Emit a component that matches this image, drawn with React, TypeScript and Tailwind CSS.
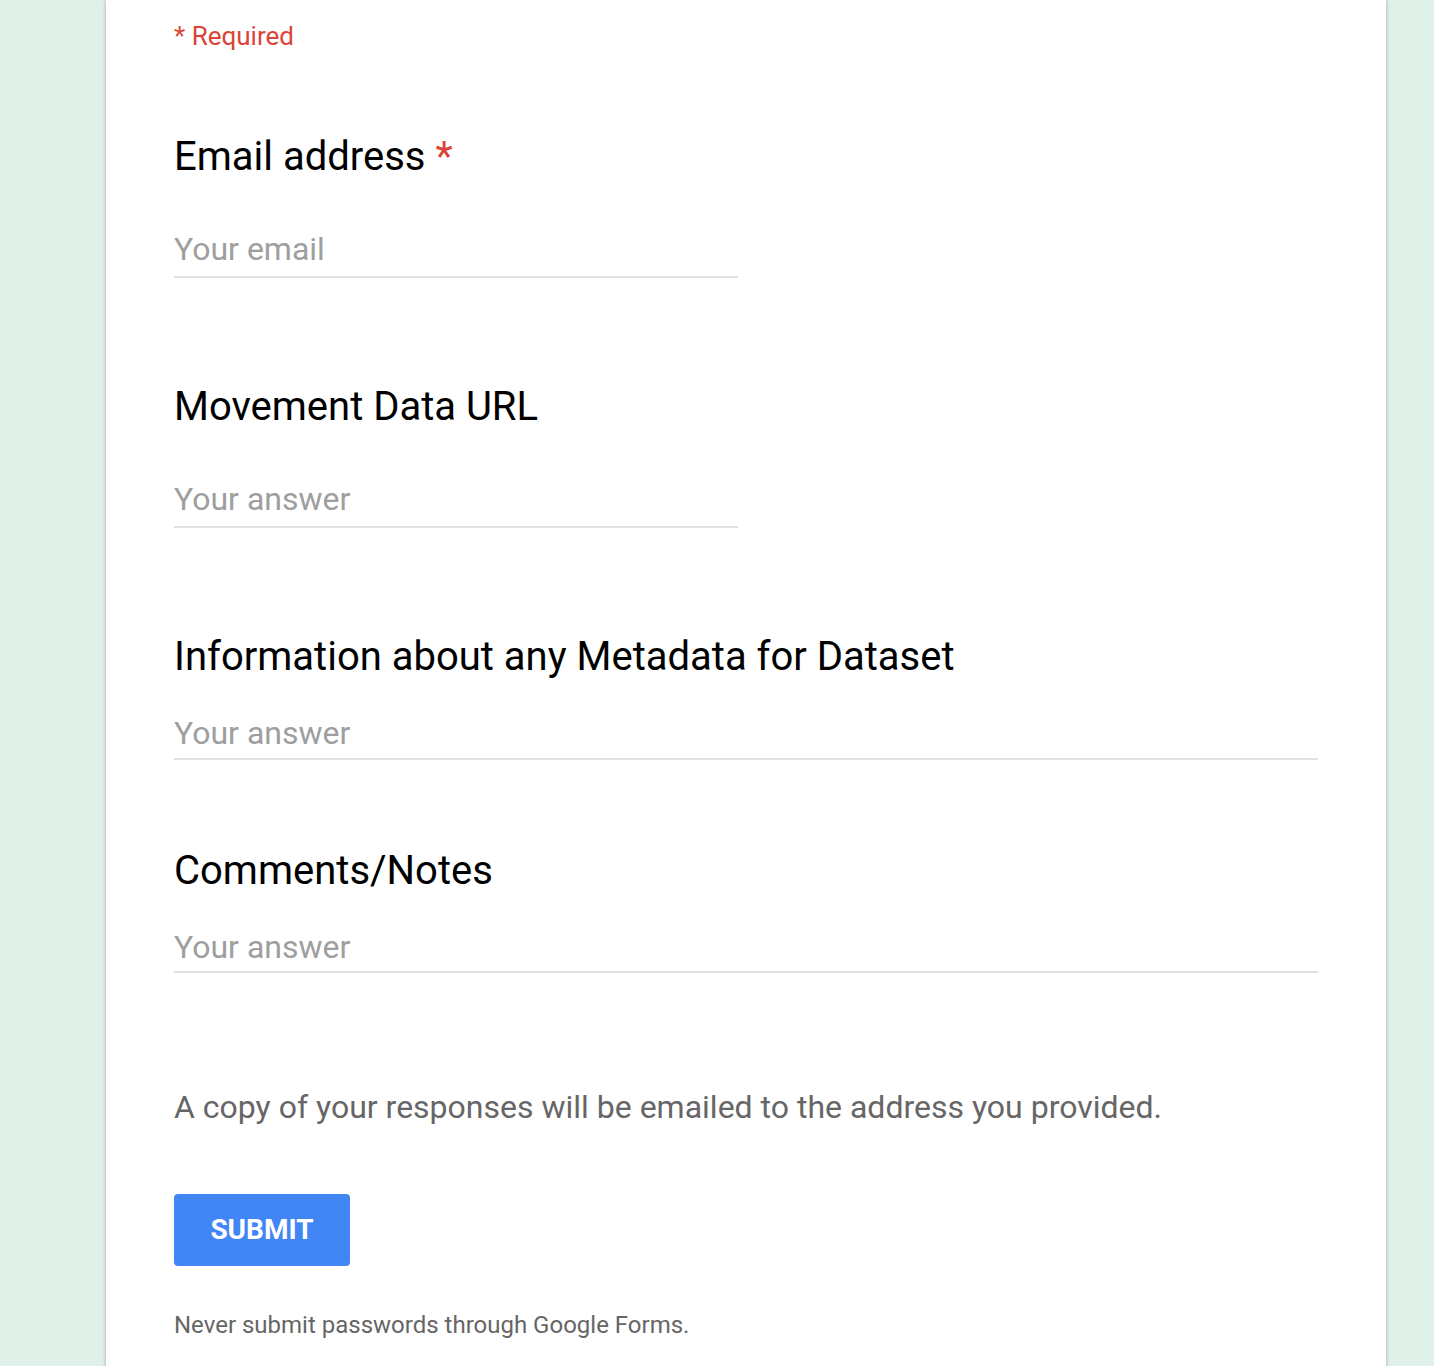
const font = { fontFamily: "Roboto, 'Noto Sans', Arial, sans-serif" };

function Question({
  title,
  required,
  placeholder,
  wide,
  className,
  lineClass,
}: {
  title: string;
  required?: boolean;
  placeholder: string;
  wide?: boolean;
  className?: string;
  lineClass: string;
}) {
  return (
    <div className={className}>
      <div className="text-[40px] leading-[48px] text-black">
        {title}
        {required && <span className="ml-[10px] text-[#db4437]">*</span>}
      </div>
      <div
        className={`${wide ? "mt-[32px] w-full" : "mt-[48px] w-[564px]"} border-b-2 border-[#e0e0e0] ${lineClass}`}
      >
        <div className="text-[32px] leading-[40px] text-[#9e9e9e]">{placeholder}</div>
      </div>
    </div>
  );
}

export default function App() {
  return (
    <div className="min-h-[1366px] w-full overflow-hidden bg-[#e0f1ea]" style={font}>
      <div className="ml-[106px] min-h-[1400px] w-[1280px] bg-white px-[68px] pt-[18px] shadow-[0_0_4px_rgba(0,0,0,0.3)]">
        <div className="text-[26px] leading-[36px] text-[#db4437]">* Required</div>

        <Question
          className="mt-[79px]"
          title="Email address"
          required
          placeholder="Your email"
          lineClass="pb-[7px]"
        />
        <Question
          className="mt-[105px]"
          title="Movement Data URL"
          placeholder="Your answer"
          lineClass="pb-[7px]"
        />
        <Question
          className="mt-[105px]"
          title="Information about any Metadata for Dataset"
          placeholder="Your answer"
          wide
          lineClass="pb-[5px]"
        />
        <Question
          className="mt-[87px]"
          title="Comments/Notes"
          placeholder="Your answer"
          wide
          lineClass="pb-[4px]"
        />

        <p className="mt-[114px] text-[32px] leading-[40px] text-[#666666]">
          A copy of your responses will be emailed to the address you provided.
        </p>

        <button className="mt-[67px] block h-[72px] w-[176px] rounded-[4px] bg-[#4285f4] text-[28px] font-bold text-white">
          SUBMIT
        </button>

        <p className="mt-[43px] text-[24px] leading-[32px] text-[#666666]">
          Never submit passwords through Google Forms.
        </p>
      </div>
    </div>
  );
}
